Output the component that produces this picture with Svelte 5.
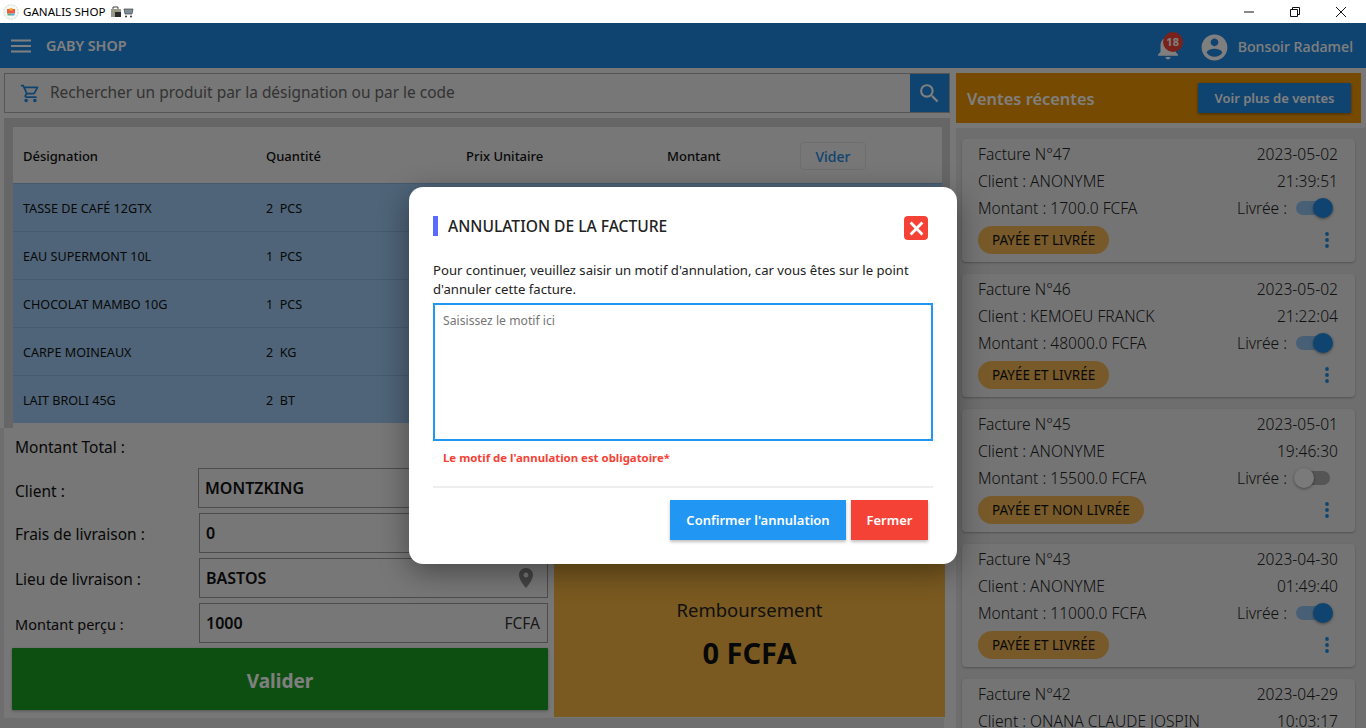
<script>
  const rows = [
    { name: "TASSE DE CAFÉ 12GTX", qty: "2", unit: "PCS" },
    { name: "EAU SUPERMONT 10L", qty: "1", unit: "PCS" },
    { name: "CHOCOLAT MAMBO 10G", qty: "1", unit: "PCS" },
    { name: "CARPE MOINEAUX", qty: "2", unit: "KG" },
    { name: "LAIT BROLI 45G", qty: "2", unit: "BT" },
  ];
  const ventes = [
    { num: 47, client: "ANONYME", date: "2023-05-02", time: "21:39:51", amount: "1700.0", on: true },
    { num: 46, client: "KEMOEU FRANCK", date: "2023-05-02", time: "21:22:04", amount: "48000.0", on: true },
    { num: 45, client: "ANONYME", date: "2023-05-01", time: "19:46:30", amount: "15500.0", on: false },
    { num: 43, client: "ANONYME", date: "2023-04-30", time: "01:49:40", amount: "11000.0", on: true },
    { num: 42, client: "ONANA  CLAUDE JOSPIN", date: "2023-04-29", time: "10:03:17", amount: "9000.0", on: true },
  ];
</script>

<div class="window">
  <div class="titlebar">
    <svg class="logo" viewBox="0 0 16 16" width="16" height="16">
      <circle cx="8" cy="8" r="7.200" fill="#f6f8f4" stroke="#c4dccb" stroke-dasharray="2 1" />
      <rect x="4" y="5" width="8" height="4.500" fill="#ee5a48" />
      <rect x="6.500" y="4" width="3" height="2.500" fill="#f2b632" />
      <rect x="4.500" y="9.500" width="3.500" height="2" fill="#58b368" />
      <rect x="8" y="9.500" width="3.500" height="2" fill="#5aa8e0" />
    </svg>
    <span class="app-name">GANALIS SHOP</span>
    <svg class="emoji" viewBox="0 0 24 12" width="24" height="12">
      <rect x="1" y="3" width="10" height="8" fill="#9a9a88" />
      <path d="M3 3V1h5v2" fill="none" stroke="#444" />
      <rect x="5" y="6" width="6" height="5" fill="#2a2a2a" />
      <path d="M14 3h9l-1 5h-7z" fill="#7d8f9a" stroke="#444" stroke-width=".7" />
      <circle cx="16" cy="10.500" r="1" fill="#333" /><circle cx="21" cy="10.500" r="1" fill="#333" />
    </svg>
    <div class="win-controls">
      <svg viewBox="0 0 10 10" width="10" height="10"><path d="M0 5h10" stroke="#111" /></svg>
      <svg viewBox="0 0 10 10" width="10" height="10"><path d="M.5 2.500h7v7h-7zM2.500 2.500v-2h7v7h-2" fill="none" stroke="#111" /></svg>
      <svg viewBox="0 0 10 10" width="10" height="10"><path d="M0 0l10 10M10 0L0 10" stroke="#111" /></svg>
    </div>
  </div>

  <header class="appbar">
    <svg class="burger" viewBox="0 0 20 14" width="20" height="14"><path d="M0 1.500h20M0 7h20M0 12.500h20" stroke="#fff" stroke-width="1.800" /></svg>
    <span class="shop">GABY SHOP</span>
    <div class="bell">
      <svg viewBox="0 0 24 24" width="30" height="30"><path fill="#fff" d="M12 22c1.100 0 2-.9 2-2h-4c0 1.100.9 2 2 2zm6-6v-5c0-3.070-1.630-5.640-4.500-6.320V4c0-.83-.67-1.500-1.500-1.500s-1.500.67-1.500 1.500v.68C7.640 5.360 6 7.920 6 11v5l-2 2v1h16v-1l-2-2z" /></svg>
      <span class="badge">18</span>
    </div>
    <svg class="avatar" viewBox="0 0 24 24" width="31" height="31"><path fill="#fff" d="M12 2C6.480 2 2 6.480 2 12s4.480 10 10 10 10-4.480 10-10S17.520 2 12 2zm0 3c1.660 0 3 1.340 3 3s-1.340 3-3 3-3-1.340-3-3 1.340-3 3-3zm0 14.200c-2.500 0-4.710-1.280-6-3.220.03-1.990 4-3.080 6-3.080 1.990 0 5.970 1.090 6 3.080-1.290 1.940-3.500 3.220-6 3.220z" /></svg>
    <span class="hello">Bonsoir Radamel</span>
  </header>

  <main class="content">
    <section class="left">
      <div class="search">
        <svg class="cart" viewBox="0 0 24 24" width="21" height="21"><path fill="#2088e0" d="M15.550 13c.75 0 1.410-.41 1.750-1.030l3.580-6.490A.996.996 0 0 0 20.010 4H5.210l-.94-2H1v2h2l3.600 7.590-1.350 2.440C4.520 15.370 5.480 17 7 17h12v-2H7l1.100-2h7.450zM6.160 6h12.150l-2.760 5H8.530L6.160 6zM7 18c-1.100 0-1.990.9-1.990 2S5.900 22 7 22s2-.9 2-2-.9-2-2-2zm10 0c-1.100 0-1.990.9-1.990 2s.89 2 1.990 2 2-.9 2-2-.9-2-2-2z" /></svg>
        <span class="search-text">Rechercher un produit par la désignation ou par le code</span>
        <div class="search-btn">
          <svg viewBox="0 0 24 24" width="25" height="25"><path fill="#fff" d="M15.500 14h-.79l-.28-.27A6.470 6.470 0 0 0 16 9.500 6.500 6.500 0 1 0 9.500 16c1.610 0 3.090-.59 4.230-1.570l.27.28v.79l5 4.990L20.490 19l-4.990-5zm-6 0C7.010 14 5 11.990 5 9.500S7.010 5 9.500 5 14 7.010 14 9.500 11.990 14 9.500 14z" /></svg>
        </div>
      </div>

      <div class="cart-panel">
        <div class="table">
          <div class="thead">
            <span>Désignation</span>
            <span>Quantité</span>
            <span>Prix Unitaire</span>
            <span>Montant</span>
            <button class="vider">Vider</button>
          </div>
          {#each rows as row}
            <div class="trow">
              <span>{row.name}</span>
              <span class="qty">{row.qty}&nbsp; {row.unit}</span>
            </div>
          {/each}
        </div>
      </div>

      <div class="bottom">
        <div class="form">
          <div class="total">Montant Total :</div>
          <div class="field client">
            <label for="client">Client :</label>
            <div class="box" id="client"><b>MONTZKING</b></div>
          </div>
          <div class="field">
            <label for="frais">Frais de livraison :</label>
            <div class="box" id="frais"><b>0</b></div>
          </div>
          <div class="field">
            <label for="lieu">Lieu de livraison :</label>
            <div class="box" id="lieu">
              <b>BASTOS</b>
              <svg viewBox="0 0 24 24" width="24" height="24"><path fill="#888" d="M12 2C8.130 2 5 5.130 5 9c0 5.250 7 13 7 13s7-7.750 7-13c0-3.870-3.130-7-7-7zm0 9.500a2.500 2.500 0 0 1 0-5 2.500 2.500 0 0 1 0 5z" /></svg>
            </div>
          </div>
          <div class="field percu">
            <label for="percu">Montant perçu :</label>
            <div class="box" id="percu"><b>1000</b><span class="unit">FCFA</span></div>
          </div>
          <button class="valider">Valider</button>
        </div>
        <div class="recap">
          <div class="recap-top"></div>
          <div class="refund">
            <div class="refund-label">Remboursement</div>
            <div class="refund-value">0 FCFA</div>
          </div>
        </div>
      </div>
    </section>

    <aside class="right">
      <div class="recent-head">
        <span>Ventes récentes</span>
        <button class="more">Voir plus de ventes</button>
      </div>
      <div class="list">
        {#each ventes as v}
          <article class="card">
            <div class="line l1"><span>Facture N°{v.num}</span><span>{v.date}</span></div>
            <div class="line l2"><span>Client : {v.client}</span><span>{v.time}</span></div>
            <div class="line l3">
              <span>Montant : {v.amount} FCFA</span>
              <span class="livree">Livrée :
                <span class="switch" class:on={v.on}><i></i></span>
              </span>
            </div>
            <div class="line l4">
              <span class="pill">{v.on ? "PAYÉE ET LIVRÉE" : "PAYÉE ET NON LIVRÉE"}</span>
              <svg viewBox="0 0 4 16" width="4" height="16"><circle cx="2" cy="2" r="1.900" /><circle cx="2" cy="8" r="1.900" /><circle cx="2" cy="14" r="1.900" /></svg>
            </div>
          </article>
        {/each}
      </div>
    </aside>
  </main>

  <div class="overlay">
    <div class="modal">
      <div class="modal-head">
        <span class="mark"></span>
        <h2>ANNULATION DE LA FACTURE</h2>
        <button class="close" aria-label="Fermer">
          <svg viewBox="0 0 14 14" width="15" height="15"><path d="M1.500 1.500l11 11M12.500 1.500l-11 11" stroke="#fff" stroke-width="2.600" /></svg>
        </button>
      </div>
      <p>Pour continuer, veuillez saisir un motif d'annulation, car vous êtes sur le point d'annuler cette facture.</p>
      <textarea placeholder="Saisissez le motif ici"></textarea>
      <div class="error">Le motif de l'annulation est obligatoire*</div>
      <hr />
      <div class="actions">
        <button class="confirm">Confirmer l'annulation</button>
        <button class="fermer">Fermer</button>
      </div>
    </div>
  </div>
</div>

<style>
  :global(body) {
    margin: 0;
    overflow: hidden;
  }
  * {
    box-sizing: border-box;
  }
  button {
    font-family: inherit;
    border: none;
    cursor: pointer;
  }
  .window {
    position: relative;
    width: 1366px;
    height: 728px;
    overflow: hidden;
    display: flex;
    flex-direction: column;
    background: #eee;
    color: #111;
    font-family: "Noto Sans", sans-serif;
  }
  .titlebar {
    height: 23px;
    flex: none;
    background: #fff;
    display: flex;
    align-items: center;
    padding-left: 3px;
    font-size: 11.600px;
    color: #000;
  }
  .app-name {
    margin-left: 4px;
  }
  .emoji {
    margin-left: 5px;
  }
  .win-controls {
    margin-left: auto;
    display: flex;
    gap: 36px;
    padding-right: 20px;
  }
  .appbar {
    height: 45px;
    flex: none;
    background: #2088e0;
    color: #fff;
    display: flex;
    align-items: center;
    padding: 0 13px 0 11px;
  }
  .shop {
    margin-left: 15px;
    font-size: 14.300px;
    font-weight: 600;
  }
  .bell {
    position: relative;
    margin-left: auto;
    height: 30px;
    top: 1px;
  }
  .badge {
    position: absolute;
    top: 0;
    left: 10px;
    width: 20px;
    height: 20px;
    border-radius: 50%;
    background: #f44336;
    font-size: 11px;
    font-weight: 700;
    display: flex;
    align-items: center;
    justify-content: center;
  }
  .avatar {
    margin-left: 16px;
    position: relative;
    top: 2px;
  }
  .hello {
    margin-left: 8px;
    font-size: 14.200px;
    font-weight: 500;
    position: relative;
    top: 1px;
  }
  .content {
    flex: 1;
    display: flex;
    min-height: 0;
  }
  .left {
    width: 956px;
    flex: none;
    padding: 5px 6px 0 0;
    display: flex;
    flex-direction: column;
  }
  .search {
    height: 40px;
    flex: none;
    margin-left: 4px;
    border: 1px solid #aaa;
    display: flex;
    align-items: center;
    padding-left: 15px;
  }
  .search-text {
    margin-left: 9px;
    font-size: 15.450px;
    color: #666;
    position: relative;
    top: -1px;
  }
  .search-btn {
    margin-left: auto;
    width: 39px;
    height: 100%;
    background: #2088e0;
    display: flex;
    align-items: center;
    justify-content: center;
  }
  .cart-panel {
    margin: 5px 0 0 4px;
    padding: 9px 8px 0 9px;
    height: 310px;
    flex: none;
    background: #ccc;
  }
  .table {
    background: #eee;
    height: 100%;
    overflow: hidden;
  }
  .thead,
  .trow {
    display: grid;
    grid-template-columns: 243px 200px 201px 133px 66px;
    align-items: center;
    padding-left: 10px;
  }
  .thead {
    height: 56px;
    padding-top: 2px;
    font-size: 13px;
    font-weight: 500;
  }
  .vider {
    height: 28px;
    background: #eee;
    border: 1px solid #ddd;
    border-radius: 4px;
    color: #2088e0;
    font-size: 14px;
    font-weight: 500;
  }
  .trow {
    height: 48px;
    padding-top: 2px;
    background: #9ec8f0;
    border-top: 1px solid #8ab4dc;
    font-size: 12.600px;
  }
  .bottom {
    flex: 1;
    display: flex;
    min-height: 0;
    margin-right: 6px;
    padding: 0 0 10px 4px;
    background: #dcdcdc;
  }
  .form {
    width: 548px;
    flex: none;
    padding: 0 4px 0 8px;
    background: #eee;
    font-size: 15.500px;
    display: flex;
    flex-direction: column;
  }
  .total {
    height: 40px;
    display: flex;
    align-items: center;
    padding: 0 0 2px 3px;
    flex: none;
  }
  .field {
    height: 40px;
    margin-bottom: 5px;
    display: flex;
    align-items: center;
    flex: none;
  }
  .field label {
    width: 187px;
    padding: 1px 0 0 3px;
    flex: none;
  }
  .field.client label {
    width: 186px;
    padding-top: 5px;
  }
  .field.percu label {
    font-size: 14.500px;
  }
  .box {
    flex: 1;
    height: 100%;
    border: 1px solid #999;
    display: flex;
    align-items: center;
    justify-content: space-between;
    padding: 0 7px 0 6px;
  }
  .box b {
    font-size: 16px;
    font-weight: 600;
  }
  #lieu {
    padding-right: 9px;
  }
  .unit {
    font-size: 15.500px;
    color: #333;
  }
  .valider {
    height: 62px;
    padding-top: 4px;
    background: #1a9e20;
    color: #fff;
    font-size: 19px;
    font-weight: 700;
    border-radius: 1px;
    box-shadow: 0 1px 3px rgba(0, 0, 0, 0.3);
  }
  .recap {
    width: 393px;
    flex: none;
    display: flex;
    flex-direction: column;
    background: #eee;
  }
  .recap-top {
    flex: 1;
  }
  .refund {
    height: 212px;
    margin: 0 0 1px 2px;
    background: #f4b440;
    display: flex;
    flex-direction: column;
    align-items: center;
    padding-top: 92px;
  }
  .refund-label {
    font-size: 18.500px;
    color: #222;
  }
  .refund-value {
    font-size: 29px;
    font-weight: 700;
    margin-top: 11px;
  }
  .right {
    flex: 1;
    min-width: 0;
    padding-top: 5px;
    display: flex;
    flex-direction: column;
  }
  .recent-head {
    height: 50px;
    width: 405px;
    flex: none;
    background: #ec9400;
    display: flex;
    align-items: center;
    justify-content: space-between;
    padding: 0 10px 0 11px;
    color: #fff;
    font-size: 16.400px;
    font-weight: 600;
  }
  .more {
    width: 153px;
    height: 30px;
    background: #2088e0;
    color: #fff;
    font-size: 13px;
    font-weight: 600;
    border-radius: 1px;
    box-shadow: 0 1px 3px rgba(0, 0, 0, 0.4);
  }
  .list {
    flex: 1;
    margin-top: 5px;
    padding: 11px 11px 0 6px;
    background: #dcdcdc;
    display: flex;
    flex-direction: column;
    gap: 12px;
    overflow: hidden;
  }
  .card {
    height: 123px;
    flex: none;
    background: #e8e8e8;
    border-radius: 4px;
    box-shadow: 0 1px 2px rgba(0, 0, 0, 0.25);
    padding: 1px 17px 0 16px;
    font-size: 15.600px;
    font-weight: 300;
    color: #222;
  }
  .line {
    display: flex;
    justify-content: space-between;
    align-items: center;
  }
  .l1,
  .l2,
  .l3 {
    height: 27px;
  }
  .livree {
    display: flex;
    align-items: center;
    gap: 9px;
  }
  .switch {
    position: relative;
    width: 34px;
    height: 14px;
    border-radius: 7px;
    background: #aaa;
    margin-right: 8px;
  }
  .switch i {
    position: absolute;
    top: -3px;
    left: -2px;
    width: 20px;
    height: 20px;
    border-radius: 50%;
    background: #f5f5f5;
    box-shadow: 0 1px 3px rgba(0, 0, 0, 0.4);
  }
  .switch.on {
    background: #90c0ec;
  }
  .switch.on i {
    left: 17px;
    background: #2088e0;
  }
  .l4 {
    margin-top: 5px;
  }
  .l4 svg {
    fill: #2088e0;
    margin-right: 9px;
  }
  .pill {
    height: 28px;
    padding: 0 14px;
    border-radius: 14px;
    background: #f0b454;
    color: #111;
    font-size: 13.500px;
    font-weight: 400;
    display: flex;
    align-items: center;
  }
  .overlay {
    position: absolute;
    inset: 23px 0 0 0;
    background: rgba(0, 0, 0, 0.5);
    display: flex;
    align-items: center;
    justify-content: center;
  }
  .modal {
    width: 548px;
    height: 377px;
    background: #fff;
    border-radius: 14px;
    padding: 29px 24px 0;
    box-shadow: 0 8px 30px rgba(0, 0, 0, 0.4);
    color: #222;
  }
  .modal-head {
    display: flex;
    align-items: flex-start;
    height: 24px;
    padding-right: 5px;
  }
  .mark {
    width: 5px;
    height: 20px;
    background: #5a6cff;
  }
  h2 {
    margin: 0 0 0 10px;
    font-size: 15.600px;
    line-height: 20px;
    font-weight: 500;
  }
  .close {
    margin-left: auto;
    width: 24px;
    height: 24px;
    padding: 0;
    border-radius: 4px;
    background: #f44336;
    display: flex;
    align-items: center;
    justify-content: center;
  }
  p {
    margin: 21px 0 4px;
    font-size: 13.140px;
    line-height: 19px;
    width: 490px;
  }
  textarea {
    display: block;
    width: 500px;
    height: 138px;
    border: 2px solid #2196f3;
    outline: none;
    resize: none;
    padding: 7px 8px;
    font-family: inherit;
    font-size: 12.200px;
    color: #222;
  }
  textarea::placeholder {
    color: #757575;
  }
  .error {
    margin: 9px 0 0 10px;
    color: #f44336;
    font-size: 11.400px;
    font-weight: 700;
    line-height: 16px;
  }
  hr {
    margin: 20px 0 0;
    width: 500px;
    height: 2px;
    border: none;
    background: #eee;
  }
  .actions {
    display: flex;
    justify-content: flex-end;
    gap: 5px;
    margin-top: 12px;
    padding-right: 5px;
  }
  .actions button {
    height: 40px;
    color: #fff;
    font-size: 13px;
    font-weight: 600;
    box-shadow: 0 2px 3px rgba(0, 0, 0, 0.25);
  }
  .confirm {
    width: 176px;
    background: #2196f3;
  }
  .fermer {
    width: 77px;
    background: #f44336;
  }
</style>
